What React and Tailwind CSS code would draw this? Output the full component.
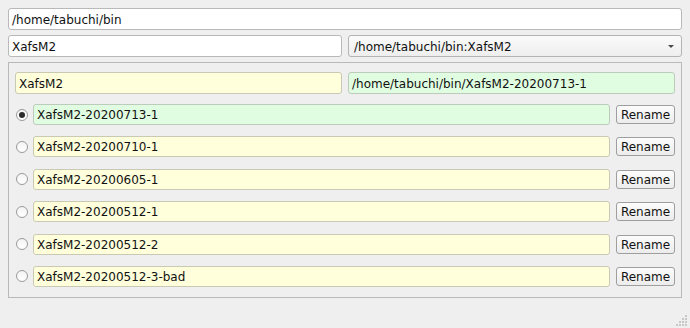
import React from "react";

const rows = [
  { name: "XafsM2-20200713-1", checked: true },
  { name: "XafsM2-20200710-1" },
  { name: "XafsM2-20200605-1" },
  { name: "XafsM2-20200512-1" },
  { name: "XafsM2-20200512-2" },
  { name: "XafsM2-20200512-3-bad" },
];

function Radio({ checked }) {
  return (
    <div className="w-[12px] h-[12px] rounded-full border border-[#9a9a9a] bg-gradient-to-b from-[#f4f4f4] to-[#ffffff] flex items-center justify-center shrink-0">
      {checked && <div className="w-[6px] h-[6px] rounded-full bg-[#2a2a2a]" />}
    </div>
  );
}

export default function App() {
  return (
    <div
      className="w-[690px] h-[328px] bg-[#efefef] text-[12px] text-[#111111] relative"
      style={{ fontFamily: '"DejaVu Sans", sans-serif' }}
    >
      <div className="pt-[8px] px-[8px] pr-[8px] flex flex-col">
        <div className="h-[22px] w-[674px] bg-white border border-[#b9b9b9] rounded-[3px] flex items-center pl-[3px] pt-[1px]">
          /home/tabuchi/bin
        </div>
        <div className="mt-[5px] flex gap-[6px] w-[674px]">
          <div className="h-[22px] w-[334px] bg-white border border-[#b9b9b9] rounded-[3px] flex items-center pl-[3px] pt-[1px]">
            XafsM2
          </div>
          <div className="h-[22px] flex-1 border border-[#b4b4b4] rounded-[3px] bg-gradient-to-b from-[#fbfbfb] to-[#eeeeee] flex items-center pl-[5px] pr-[7px] pt-[1px]">
            <span className="flex-1">/home/tabuchi/bin:XafsM2</span>
            <svg width="6" height="3" viewBox="0 0 6 3">
              <path d="M0 0 H6 L3 3 Z" fill="#4a4a4a" />
            </svg>
          </div>
        </div>
        <div className="mt-[5px] w-[674px] h-[236px] border border-[#b9b9b9] pt-[9px] pl-[6px] pr-[6px]">
          <div className="flex gap-[6px]">
            <div className="h-[22px] w-[327px] bg-[#ffffdc] border border-[#c9c9b4] rounded-[3px] flex items-center pl-[3px] pt-[1px]">
              XafsM2
            </div>
            <div className="h-[22px] flex-1 bg-[#e1fde1] border border-[#bccbbc] rounded-[3px] flex items-center pl-[3px] pt-[1px]">
              /home/tabuchi/bin/XafsM2-20200713-1
            </div>
          </div>
          <div className="mt-[10px] flex flex-col gap-[11.4px]">
            {rows.map((r) => (
              <div key={r.name} className="flex items-center h-[21px]">
                <div className="w-[18px] flex justify-start pl-[1px]">
                  <Radio checked={r.checked} />
                </div>
                <div
                  className={
                    "h-[21px] w-[577px] border rounded-[3px] flex items-center pl-[3px] pt-[1px] " +
                    (r.checked
                      ? "bg-[#e1fde1] border-[#bccbbc]"
                      : "bg-[#ffffdc] border-[#c9c9b4]")
                  }
                >
                  {r.name}
                </div>
                <button className="ml-[6px] h-[19px] w-[59px] border border-[#9e9e9e] rounded-[3px] bg-gradient-to-b from-[#fcfcfc] to-[#ececec] flex items-center justify-center text-[12px] leading-none pt-[1px]">
                  Rename
                </button>
              </div>
            ))}
          </div>
        </div>
      </div>
      <svg className="absolute right-[2px] bottom-[2px]" width="12" height="12" viewBox="0 0 12 12">
        {[
          [10, 2], [7, 5], [10, 5], [4, 8], [7, 8], [10, 8], [1, 11], [4, 11], [7, 11], [10, 11],
        ].map(([x, y], i) => (
          <rect key={i} x={x - 1} y={y - 1} width="2" height="2" fill="#c8c8c8" />
        ))}
      </svg>
    </div>
  );
}
